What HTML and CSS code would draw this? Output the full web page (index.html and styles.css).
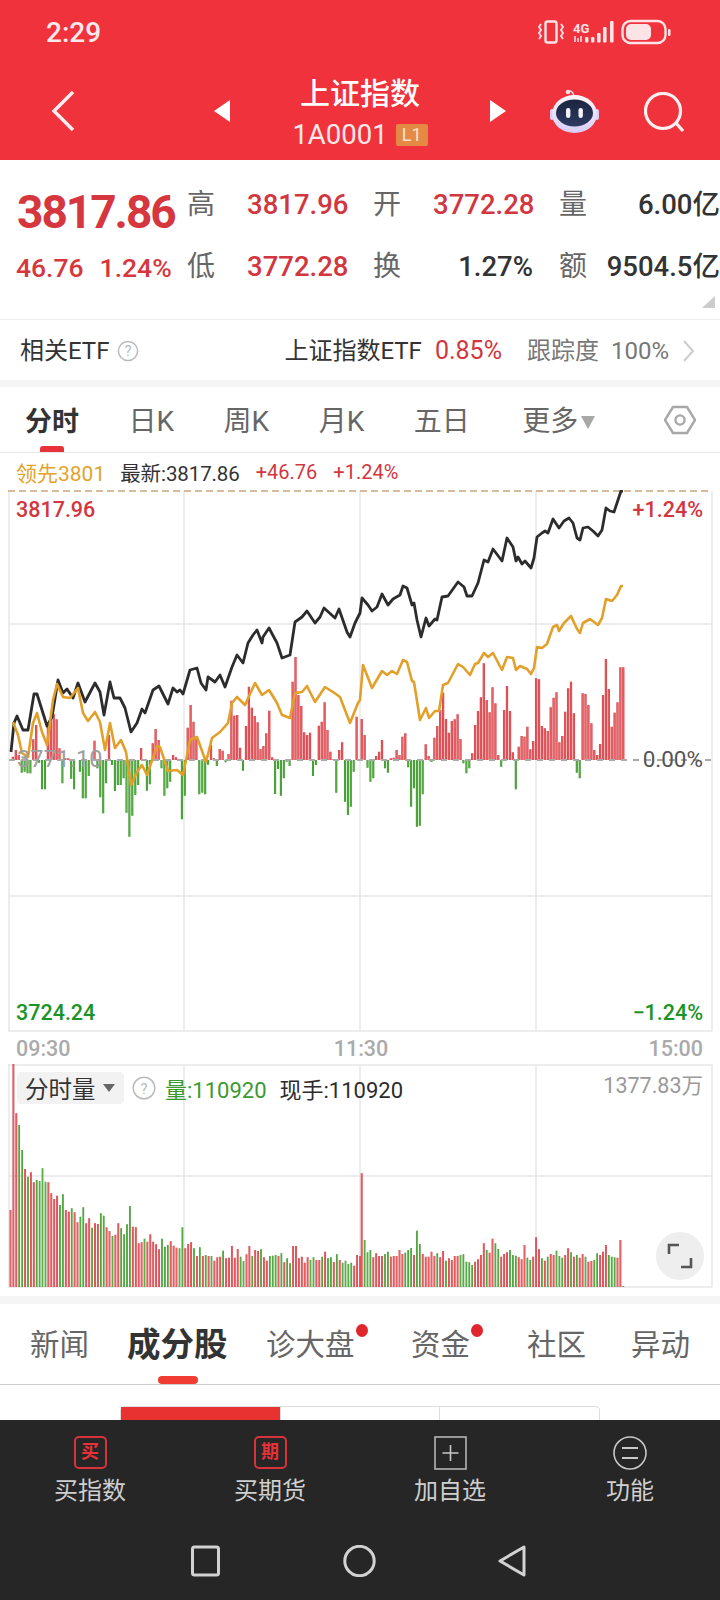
FILE: index.html
```html
<!DOCTYPE html>
<html lang="zh-CN">
<head>
<meta charset="utf-8">
<title>上证指数</title>
<link rel="stylesheet" href="styles.css">
</head>
<body>
<div class="screen">
  <header class="top">
    <div class="status">
      <span class="clock">2:29</span>
      <svg class="status-icons" viewBox="536 18 136 28" width="136" height="28">
        <g fill="none" stroke="#fde3e5" stroke-width="2.4">
          <rect x="545.5" y="21.5" width="11" height="21" rx="2"/>
          <path d="M541 24l-2 3 2 3-2 3 2 3-2 3" stroke-width="1.8"/>
          <path d="M561 24l2 3-2 3 2 3-2 3 2 3" stroke-width="1.8"/>
          <rect x="622.5" y="21" width="43" height="22" rx="8"/>
        </g>
        <text class="s4g" x="573" y="33">4G</text>
        <path d="M575 36v6M578 38v4M581 36v6" stroke="#fde3e5" stroke-width="1.5"/>
        <g fill="#fde3e5">
          <rect x="585" y="37" width="3.4" height="5.5" rx="1"/>
          <rect x="591" y="37" width="3.4" height="5.5" rx="1"/>
          <rect x="597" y="33" width="3.6" height="9.5" rx="1"/>
          <rect x="603" y="27" width="3.6" height="15.5" rx="1"/>
          <rect x="610" y="21" width="3.6" height="21.5" rx="1"/>
          <rect x="626" y="24" width="25" height="16" rx="5"/>
          <rect x="668" y="29" width="2.5" height="7" rx="1.2"/>
        </g>
      </svg>
    </div>
    <nav class="nav">
      <svg class="back" viewBox="0 0 24 42" width="24" height="42"><path d="M22 2L3 21l19 19" fill="none" stroke="#fbeef0" stroke-width="3.400"/></svg>
      <svg class="tri-left" viewBox="0 0 16 22" width="16" height="22"><path d="M16 0v22L0 11z" fill="#fff"/></svg>
      <div class="title-block">
        <div class="title">上证指数</div>
        <div class="code"><span>1A0001</span><span class="badge">L1</span></div>
      </div>
      <svg class="tri-right" viewBox="0 0 16 22" width="16" height="22"><path d="M0 0v22l16-11z" fill="#fff"/></svg>
      <svg class="robot" viewBox="0 0 49 46" width="49" height="46">
        <defs>
          <linearGradient id="robotHead" x1="0" y1="0" x2="0" y2="1">
            <stop offset="0" stop-color="#fbf7fb"/>
            <stop offset="1" stop-color="#d9cdf5"/>
          </linearGradient>
          <linearGradient id="robotFace" x1="0" y1="0" x2="0" y2="1">
            <stop offset="0" stop-color="#1c2440"/>
            <stop offset="1" stop-color="#2d3a62"/>
          </linearGradient>
        </defs>
        <path d="M24 8C23 3 20 2 18 4" fill="none" stroke="#f6dfe6" stroke-width="1.5"/>
        <circle cx="18" cy="4" r="2.3" fill="#f6dfe6"/>
        <rect x="0" y="21" width="4" height="11" rx="2" fill="#d9cdf5"/>
        <rect x="45" y="21" width="4" height="11" rx="2" fill="#d9cdf5"/>
        <ellipse cx="24.5" cy="26" rx="22.500" ry="19" fill="url(#robotHead)"/>
        <ellipse cx="24.5" cy="25" rx="18.5" ry="13.5" fill="url(#robotFace)"/>
        <rect x="16" y="20" width="4.4" height="10" rx="2.2" fill="#f3f4fb"/>
        <rect x="28.5" y="20" width="4.4" height="10" rx="2.2" fill="#f3f4fb"/>
      </svg>
      <svg class="search" viewBox="0 0 40 40" width="40" height="40"><circle cx="19" cy="19" r="17.5" fill="none" stroke="#fcf0f1" stroke-width="3.200"/><path d="M32 31l7 8" stroke="#fcf0f1" stroke-width="3.200"/></svg>
    </nav>
  </header>

  <section class="quote">
    <div class="price">3817.86</div>
    <div class="lbl">高</div><div class="val up">3817.96</div>
    <div class="lbl lbl-gap">开</div><div class="val up">3772.28</div>
    <div class="lbl lbl-gap">量</div><div class="val">6.00亿</div>
    <div class="change"><span>46.76</span><span>1.24%</span></div>
    <div class="lbl">低</div><div class="val up">3772.28</div>
    <div class="lbl lbl-gap">换</div><div class="val">1.27%</div>
    <div class="lbl lbl-gap">额</div><div class="val">9504.5亿</div>
    <span class="corner"></span>
  </section>

  <section class="etf">
    <span>相关ETF</span>
    <svg class="help" viewBox="0 0 22 22" width="22" height="22"><circle cx="11" cy="11" r="9.6" fill="none" stroke="#bbb" stroke-width="1.5"/><text x="11" y="16" class="help-q">?</text></svg>
    <span class="etf-name">上证指数ETF</span>
    <span class="up">0.85%</span>
    <span class="muted etf-track">跟踪度</span>
    <span class="muted">100%</span>
    <svg class="etf-arrow" viewBox="0 0 12 22" width="12" height="22"><path d="M1 1l9 10-9 10" fill="none" stroke="#ccc" stroke-width="2"/></svg>
  </section>
  <div class="band"></div>

  <section class="tabs">
    <span class="tab active">分时</span>
    <span class="tab">日K</span>
    <span class="tab">周K</span>
    <span class="tab">月K</span>
    <span class="tab">五日</span>
    <span class="tab tab-more">更多<i class="caret"></i></span>
    <svg class="hex" viewBox="0 0 32 32" width="32" height="32"><path d="M9 3h14l8 13-8 13H9L1 16z" fill="none" stroke="#a8a8a8" stroke-width="2.4" stroke-linejoin="round"/><circle cx="16" cy="16" r="4.6" fill="none" stroke="#a8a8a8" stroke-width="2.4"/></svg>
  </section>

  <div class="legend">
    <span class="gold">领先3801</span>
    <span class="legend-last">最新:3817.86</span>
    <span class="up">+46.76</span>
    <span class="up">+1.24%</span>
  </div>

  <svg class="price-chart" id="priceChart" viewBox="0 490 720 574" width="720" height="574">
    <g class="grid">
      <path d="M9 491V1031M184 491V1031M360 491V1031M536 491V1031M712 491V1031M9 624H712M9 896H712M8 1031H712"/>
    </g>
    <path class="dash-top" d="M8 491H712"/>
    <g id="priceBars"></g>
    <path class="dash-zero" d="M9 760H712"/>
    <polyline id="blackLine" class="line-black" points="11,752 14,723 17,716 23,730 28,730 34,694 37,694 47,726 52,717 58,680 63,693 67,689 73,698 78,683 85,702 95,683 100,692 104,715 110,682 114,698 120,698 125,708 131,732 137,723 142,709 145,713 153,690 159,686 168,704 173,688 177,692 180,690 183,694 190,670 197,668 201,683 206,690 208,677 215,682 220,675 225,687 232,667 237,655 243,663 248,643 253,635 257,630 262,643 263,637 269,628 277,643 282,658 290,655 295,622 302,617 307,611 315,623 320,617 324,608 335,618 339,609 347,632 350,637 355,623 360,613 362,598 368,605 372,611 377,607 382,594 388,605 393,599 400,595 403,586 407,588 412,605 414,603 417,620 421,637 426,618 429,626 435,619 437,620 442,597 448,596 458,582 464,587 467,596 472,596 478,583 484,560 488,562 493,549 502,561 507,538 513,547 516,561 518,557 522,564 525,561 531,568 534,558 537,537 542,533 545,531 548,533 553,519 559,528 564,521 569,518 573,523 577,538 580,540 583,528 588,527 593,531 598,536 602,530 606,508 610,511 614,512 617,503 621,491 623,491"/>
    <polyline id="goldLine" class="line-gold" points="13,722 18,735 22,753 28,757 33,723 37,713 42,732 47,745 53,700 57,684 63,697 70,698 78,688 83,713 88,721 95,712 100,722 105,750 110,723 115,748 121,740 126,752 131,785 137,772 142,765 147,775 157,746 160,747 168,771 177,770 183,775 190,740 197,737 206,762 212,738 220,732 228,723 232,703 237,697 245,705 255,683 262,695 269,690 277,703 282,715 290,718 295,693 302,692 307,686 315,702 325,687 333,692 340,697 350,723 358,703 360,700 363,665 372,688 382,671 387,675 392,671 397,674 403,660 407,662 412,681 414,682 420,720 426,708 429,718 435,711 439,711 443,685 448,683 458,664 463,667 470,675 475,664 478,663 484,653 488,657 493,653 502,670 507,657 513,658 516,670 520,666 527,669 531,674 534,668 537,647 542,648 547,644 553,627 557,625 559,631 564,623 571,616 577,629 580,633 583,623 590,619 598,625 602,618 606,599 612,601 617,595 621,586 623,586"/>
    <text class="t21 up-fill" x="16" y="517">3817.96</text>
    <text class="t21 up-fill end" x="703" y="517">+1.24%</text>
    <text class="t23 ghost" x="17" y="767">3771.10</text>
    <text class="t23 zero end" x="703" y="767">0.00%</text>
    <text class="t21 down-fill" x="16" y="1020">3724.24</text>
    <text class="t21 down-fill end" x="703" y="1020">−1.24%</text>
    <text class="t21 time" x="16" y="1056">09:30</text>
    <text class="t21 time mid" x="361" y="1056">11:30</text>
    <text class="t21 time end" x="703" y="1056">15:00</text>
  </svg>

  <section class="volume">
    <svg class="vol-chart" viewBox="0 1064 720 232" width="720" height="232">
      <g class="grid"><path d="M9 1064V1287M184 1064V1287M360 1064V1287M536 1064V1287M712 1064V1287M8 1065H712M9 1176H712M8 1287H712"/></g>
      <g id="volBars"></g>
    </svg>
    <div class="vol-legend">
      <span class="chip">分时量<i class="chip-caret"></i></span>
      <svg class="help-vol" viewBox="0 0 24 24" width="24" height="24"><circle cx="12" cy="12" r="10.8" fill="none" stroke="#bbb" stroke-width="1.5"/><text x="12" y="17.5" class="help-q">?</text></svg>
      <span class="vol-green">量:110920</span>
      <span class="vol-now">现手:110920</span>
    </div>
    <span class="vol-max">1377.83万</span>
    <span class="expand">
      <svg viewBox="0 0 26 26" width="26" height="26"><path d="M2 11V2h10M24 15v9H14" fill="none" stroke="#555" stroke-width="2.6"/></svg>
    </span>
  </section>
  <div class="band band-2"></div>

  <section class="subtabs">
    <span class="subtab">新闻</span>
    <span class="subtab active">成分股</span>
    <span class="subtab dot">诊大盘</span>
    <span class="subtab dot">资金</span>
    <span class="subtab">社区</span>
    <span class="subtab">异动</span>
  </section>

  <div class="segments">
    <span class="seg seg-on"></span><span class="seg"></span><span class="seg"></span>
  </div>

  <footer class="bottom">
    <div class="actions">
      <div class="action"><span class="stamp">买</span><span>买指数</span></div>
      <div class="action"><span class="stamp">期</span><span>买期货</span></div>
      <div class="action">
        <svg viewBox="0 0 33 34" width="33" height="34"><rect x="1" y="1" width="31" height="32" fill="none" stroke="#b5b5b5" stroke-width="1.6"/><path d="M16.5 9v16M8.500 17h16" stroke="#c8c8c8" stroke-width="1.6"/></svg>
        <span>加自选</span>
      </div>
      <div class="action">
        <svg viewBox="0 0 34 34" width="34" height="34"><circle cx="17" cy="17" r="16" fill="none" stroke="#c8c8c8" stroke-width="1.6"/><path d="M9 12h16M9 22h16" stroke="#c8c8c8" stroke-width="1.8"/></svg>
        <span>功能</span>
      </div>
    </div>
    <div class="sysnav">
      <svg viewBox="0 0 29 32" width="29" height="32"><rect x="1.500" y="2" width="26" height="28" rx="2" fill="none" stroke="#d2d2d2" stroke-width="3"/></svg>
      <svg viewBox="0 0 33 32" width="33" height="32"><circle cx="16.500" cy="16" r="14.700" fill="none" stroke="#d2d2d2" stroke-width="3"/></svg>
      <svg viewBox="0 0 28 32" width="28" height="32"><path d="M26 2v28L2 16z" fill="none" stroke="#d2d2d2" stroke-width="3" stroke-linejoin="round"/></svg>
    </div>
  </footer>
</div>
<script src="chart.js"></script>
</body>
</html>
```

FILE: styles.css
```css
* { box-sizing: border-box; }
html, body { margin: 0; padding: 0; background: #fff; }
body { font-family: Roboto, "Noto Sans CJK SC", sans-serif; color: #333; }
.screen { width: 720px; height: 1600px; display: flex; flex-direction: column; overflow: hidden; position: relative; }

.top { height: 160px; background: #f0323c; color: #fff; flex: none; }
.status { height: 64px; padding: 0 48px 0 46px; display: flex; align-items: center; justify-content: space-between; }
.clock { font-size: 28px; font-weight: 500; color: #fbe9ea; }
.status-icons { display: block; }
.s4g { font: 700 13px Roboto, sans-serif; fill: #fde3e5; }

.nav { height: 96px; padding-left: 51px; display: flex; align-items: center; }
.back { flex: none; margin-top: -3px; }
.tri-left { margin-left: 139px; flex: none; margin-top: -2px; }
.tri-right { flex: none; margin-top: -2px; }
.title-block { width: 260px; align-self: flex-start; padding-top: 13px; display: flex; flex-direction: column; align-items: center; }
.title { font-size: 30px; line-height: 34px; font-weight: 500; }
.code { margin-top: 10px; display: flex; align-items: center; gap: 8px; font-size: 27.500px; line-height: 28px; color: #fbe9ea; }
.badge { width: 32px; height: 22px; background: #e58a45; border-radius: 2px; font-size: 18px; line-height: 22px; text-align: center; color: #fbe3cf; }
.robot { margin-left: 44px; flex: none; margin-top: -2px; }
.search { margin-left: 45px; flex: none; margin-top: -1px; }

.quote { height: 159px; padding-top: 14px; flex: none; position: relative; display: grid; grid-template-columns: 187px 60px 100px 86px 100px 66px 121px; grid-template-rows: 62px 62px; align-items: center; }
.price { padding-left: 17px; margin-top: 14px; font-size: 46px; line-height: 50px; font-weight: 700; color: #d6363e; letter-spacing: -2px; white-space: nowrap; }
.change { padding-left: 16px; margin-top: 2px; display: flex; gap: 16px; font-size: 26.500px; line-height: 32px; font-weight: 500; color: #d6363e; white-space: nowrap; }
.lbl { font-size: 28px; line-height: 36px; color: #666; }
.lbl-gap { padding-left: 26px; }
.val { font-size: 27.500px; line-height: 36px; font-weight: 500; text-align: right; color: #333; white-space: nowrap; }
.val.up { color: #d2363e; }
.corner { position: absolute; right: 5px; bottom: 11px; width: 13px; height: 12px; background: #ccc; clip-path: polygon(100% 0, 100% 100%, 0 100%); }

.etf { height: 61px; padding: 2px 25px 0 20px; flex: none; border-top: 1px solid #eee; display: flex; align-items: center; font-size: 24px; line-height: 30px; color: #333; white-space: nowrap; }
.help { margin-left: 8px; flex: none; }
.help-q { font: 400 15px Roboto, sans-serif; fill: #bbb; text-anchor: middle; }
.etf-name { margin-left: auto; }
.etf .up { margin-left: 13px; font-size: 25px; }
.up { color: #d2363e; }
.muted { color: #777; margin-left: 12px; }
.etf-track { margin-left: 25px; }
.etf-arrow { margin-left: 14px; flex: none; }
.band { height: 7px; background: #f5f5f5; flex: none; }

.tabs { height: 66px; padding: 0 24px 0 25px; flex: none; display: flex; align-items: flex-start; gap: 49.500px; border-bottom: 1px solid #e8e8e8; font-size: 28px; color: #666; }
.tab { position: relative; white-space: nowrap; line-height: 70px; }
.tab.active { color: #333; font-weight: 700; font-size: 27px; }
.tab.active::after { content: ""; position: absolute; left: 15px; bottom: 5px; width: 24px; height: 6px; background: #e8323a; border-radius: 3px 3px 0 0; }
.tab-more { display: flex; align-items: center; gap: 3px; margin-left: 3px; }
.caret { width: 0; height: 0; border-left: 7.500px solid transparent; border-right: 7.500px solid transparent; border-top: 13px solid #a8a8a8; }
.hex { margin-left: auto; flex: none; align-self: center; }

.legend { height: 37px; padding-left: 16px; flex: none; display: flex; align-items: center; gap: 16px; font-size: 20.500px; color: #333; white-space: nowrap; }
.legend .up { font-size: 20px; }
.gold { color: #e3a32e; font-size: 21px; margin-right: -1px; }
.legend-last { letter-spacing: -.1px; }

.price-chart, .vol-chart { display: block; flex: none; }
.grid path { fill: none; stroke: #e8e8e8; stroke-width: 1.500; }
.dash-top { fill: none; stroke: #c9a878; stroke-width: 1.500; stroke-dasharray: 7 4; }
.dash-zero { fill: none; stroke: #aaa; stroke-width: 2; stroke-dasharray: 6 6; }
.line-black { fill: none; stroke: #2c2c2c; stroke-width: 2.800; stroke-linejoin: round; }
.line-gold { fill: none; stroke: #e2a02a; stroke-width: 2.600; stroke-linejoin: round; }
.price-chart text { font-family: Roboto, sans-serif; }
.t21 { font-size: 21.500px; font-weight: 500; }
.t23 { font-size: 22.500px; }
.up-fill { fill: #d2363e; }
.down-fill { fill: #1a9426; }
.ghost { fill: #9e9e9e; font-size: 23.500px; }
.zero { fill: #555; }
.time { fill: #aaa; font-weight: 500; }
.end { text-anchor: end; }
.mid { text-anchor: middle; }

.volume { position: relative; height: 232px; flex: none; }
.vol-legend { position: absolute; left: 17px; top: 8px; display: flex; align-items: center; font-size: 22px; white-space: nowrap; }
.chip { width: 107px; height: 32px; padding-left: 8px; background: #f2f2f2; border-radius: 4px; display: flex; align-items: center; color: #333; font-size: 23.500px; }
.chip-caret { margin-left: 7px; width: 0; height: 0; border-left: 6px solid transparent; border-right: 6px solid transparent; border-top: 8px solid #666; }
.help-vol { margin-left: 8px; flex: none; }
.vol-green { margin-left: 9px; color: #3a9a30; }
.vol-now { margin-left: 13px; color: #2c2c2c; }
.vol-max { position: absolute; right: 17px; top: 8px; font-size: 21.500px; line-height: 28px; color: #9a9a9a; }
.expand { position: absolute; left: 656px; top: 168px; width: 48px; height: 48px; border-radius: 50%; background: #eee; display: flex; align-items: center; justify-content: center; }
.band-2 { height: 8px; }

.subtabs { height: 81px; padding-left: 30px; flex: none; display: grid; grid-template-columns: 98px 138px 145px 116px 104px 58px; align-items: center; border-bottom: 1px solid #ccc; font-size: 29.500px; color: #666; white-space: nowrap; }
.subtab { position: relative; line-height: 40px; margin-top: 1px; }
.subtab.active { color: #333; font-weight: 700; font-size: 33.500px; margin-left: -1px; }
.subtab.active::after { content: ""; position: absolute; left: 31px; bottom: -19px; width: 40px; height: 8px; background: #f03c32; border-radius: 4px; }
.subtab.dot { justify-self: start; }
.subtab.dot::after { content: ""; position: absolute; right: -13px; top: -1px; width: 12px; height: 13px; border-radius: 50%; background: #e0262c; }

.segments { margin: 21px 0 0 120px; width: 480px; height: 60px; flex: none; display: flex; border: 1px solid #ddd; border-radius: 4px 4px 0 0; }
.seg { flex: 1; border-left: 1px solid #ddd; }
.seg:first-child { border-left: 0; }
.seg-on { background: #e83232; }

.bottom { position: absolute; left: 0; top: 1420px; width: 720px; height: 180px; background: #262626; }
.actions { padding-top: 16px; display: grid; grid-template-columns: repeat(4, 180px); }
.action { display: flex; flex-direction: column; align-items: center; color: #cfcfcf; font-size: 24px; line-height: 26px; }
.action > svg { height: 34px; display: block; margin-bottom: 8px; }
.action > span:last-child { display: block; }
.stamp { width: 33px; height: 33px; margin-bottom: 9px; border: 2px solid #d8323a; border-radius: 5px; color: #e8323a; font-size: 18px; font-weight: 700; line-height: 27px; text-align: center; }
.sysnav { margin-top: 41px; padding-left: 191px; display: flex; gap: 122.500px; }
.sysnav svg { display: block; flex: none; }
```

FILE: chart.js
```js
var NS = 'http://www.w3.org/2000/svg';

function addPath(parent, d, color, width) {
  var p = document.createElementNS(NS, 'path');
  p.setAttribute('d', d);
  p.setAttribute('stroke', color);
  p.setAttribute('stroke-width', width);
  p.setAttribute('fill', 'none');
  parent.appendChild(p);
}

function drawPairs(parent, red, green, w) {
  addPath(parent, red, '#d63f46', w);
  addPath(parent, red, '#f57a7c', 0.6);
  addPath(parent, green, '#379428', w - 0.2);
  addPath(parent, green, '#7fcb62', 0.5);
}

/* Per-minute change bars: each value is the bar tip on the 3x scale, 240 is the zero line. */
var morning = [240,230,210,225,278,275,280,280,178,135,248,328,328,140,120,103,118,205,310,235,235,296,328,240,275,355,355,288,240,182,265,352,400,310,165,255,333,315,315,295,398,470,407,345,315,204,240,332,313,190,147,180,265,347,325,305,225,232,238,418,347,143,75,125,170,343,338,343,254,195,235,258,207,212,247,222,62,107,105,203,272,138,20,83,108,127,207,198,160,92,232,342,267,347,295,245,258,5,-69,45,78,157,165,158,288,255,137,125,67,150,215,238,338,210,187,365,405,380,275,110];
var afternoon = [117,165,263,305,295,228,215,180,265,278,235,233,210,225,170,160,262,380,325,440,437,343,193,228,246,173,138,90,38,117,158,123,118,103,177,250,280,265,220,135,93,52,-50,60,97,22,70,225,260,90,18,93,217,328,200,168,170,140,208,183,-5,-2,138,145,153,82,53,37,187,168,95,25,5,100,278,295,40,42,75,130,210,225,192,45,-63,27,140,98,67,-38,-38];

function priceBars(values, x0, step, out) {
  values.forEach(function (v, i) {
    if (v === 240) { return; }
    var x = (x0 + i * step).toFixed(1);
    var y = (680 + v / 3).toFixed(1);
    if (v < 240) { out.red += 'M' + x + ' 760V' + y; }
    else { out.green += 'M' + x + ' 760V' + y; }
  });
}

var priceOut = { red: '', green: '' };
priceBars(morning, 10, 2.913, priceOut);
priceBars(afternoon, 361.7, 2.907, priceOut);
drawPairs(document.getElementById('priceBars'), priceOut.red, priceOut.green, 2.3);

/* Volume bars: top of each bar on the 3x scale; negative value means a green bar. */
var volA = [630,190,340,-375,-450,507,-530,517,547,-540,-543,-505,-545,547,580,597,587,-615,-583,630,635,-625,637,667,-650,-622,670,655,-683,670,672,-640,-647,682,693,-708,704,670,-685,-703,-673,-618,680,682,730,727,-716,725,703,725,733,748,-716,-740,-735,724,737,743,-745,-682,745,732,727,-745,768,-742,768,-765,768,-768,782,772,770,-752,775,773,738,773,747,-770,-783,763,738,-768,750,753,-748,772,782,-768,-767,-765,768,-760,787,-775,-790,738,738,775,770,788,772,-780,-772,780,780,-770,755,-775,-772,786,-763,780,-788,-782,-792,-788,797,765,768];
var volB = [520,-720,-757,-750,772,760,768,768,-762,-755,770,768,768,750,762,-758,-750,-744,765,-692,-732,762,770,770,755,768,-760,772,753,-782,775,780,768,768,-765,-763,-785,-787,-795,785,778,765,730,-750,758,716,-730,-747,770,762,757,-750,-765,-767,772,778,735,-773,-780,770,712,748,-775,782,-770,762,765,-752,-768,-773,765,745,-757,770,-765,773,762,-770,785,783,-780,-760,765,755,735,-765,-770,-772,773,720,-858];

function volBars(values, x0, step, out) {
  values.forEach(function (v, i) {
    var x = (x0 + i * step).toFixed(1);
    var y = (1000 + Math.abs(v) / 3).toFixed(1);
    if (v > 0) { out.red += 'M' + x + ' 1287V' + y; }
    else { out.green += 'M' + x + ' 1287V' + y; }
  });
}

var volOut = { red: '', green: '' };
volBars(volA, 10.500, 2.913, volOut);
volBars(volB, 361.700, 2.907, volOut);
drawPairs(document.getElementById('volBars'), volOut.red, volOut.green, 1.9);
```
